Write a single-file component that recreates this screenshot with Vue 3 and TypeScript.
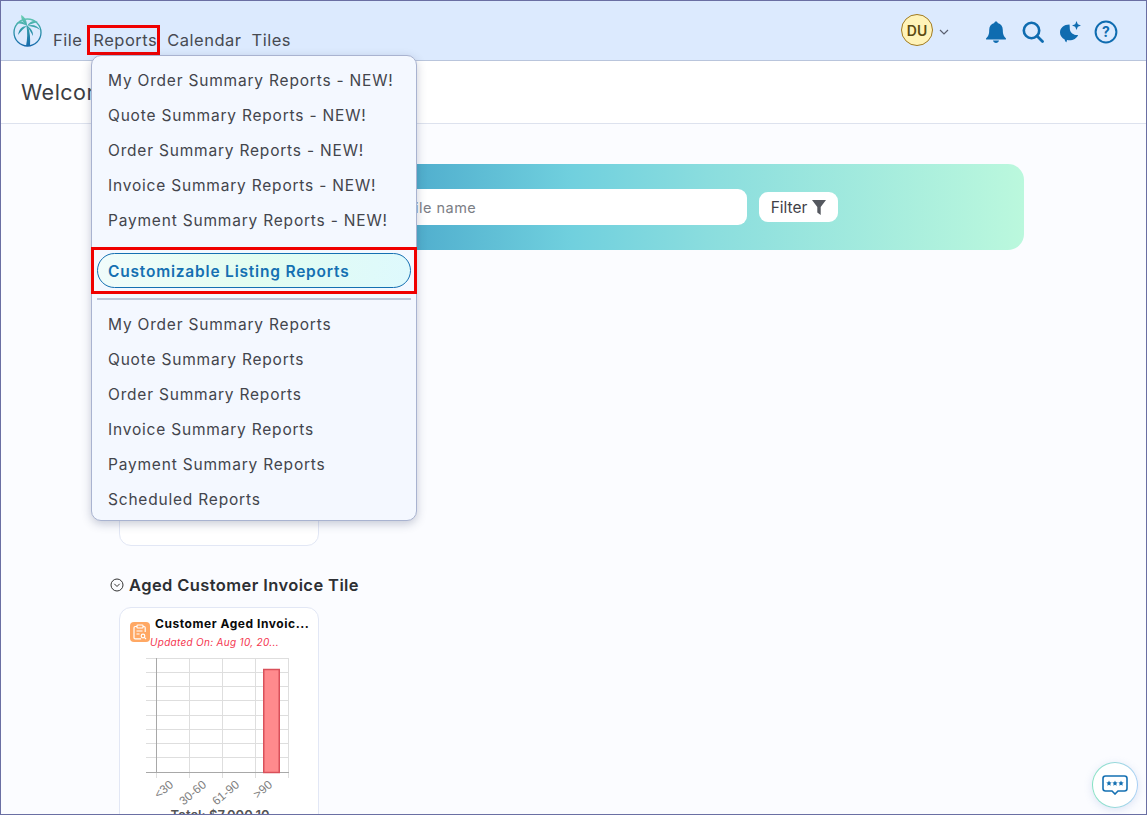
<script setup lang="ts">
const news: string[] = [
  'My Order Summary Reports - NEW!',
  'Quote Summary Reports - NEW!',
  'Order Summary Reports - NEW!',
  'Invoice Summary Reports - NEW!',
  'Payment Summary Reports - NEW!',
]
const olds: string[] = [
  'My Order Summary Reports',
  'Quote Summary Reports',
  'Order Summary Reports',
  'Invoice Summary Reports',
  'Payment Summary Reports',
  'Scheduled Reports',
]
const hLines: number[] = [0.5, 14.5, 28.5, 42.5, 57.5, 71.5, 85.5, 99.5]
const vLines: number[] = [10.5, 43.5, 76.5, 109.5, 142.5]
const labels = [
  { x: 28, t: '<30' },
  { x: 61, t: '30-60' },
  { x: 94, t: '61-90' },
  { x: 127, t: '>90' },
]
</script>

<template>
  <div class="frame">
    <header class="topbar">
      <div class="left">
        <svg class="logo" width="30" height="32" viewBox="0 0 30 32">
          <defs>
            <linearGradient id="lg" x1="0" y1="0" x2="0" y2="32" gradientUnits="userSpaceOnUse">
              <stop offset="0" stop-color="#6ed2b4" />
              <stop offset="0.5" stop-color="#2b93a8" />
              <stop offset="1" stop-color="#1668ad" />
            </linearGradient>
          </defs>
          <circle cx="14.500" cy="17.500" r="13.500" fill="none" stroke="url(#lg)" stroke-width="1.300" />
          <g fill="url(#lg)">
            <path d="M14 11C10 5 6 5 3 9C7 8 11 9 14 11z" />
            <path d="M14 11C14 6 12 2 8 0C8 4 10 8 14 11z" />
            <path d="M14 11C17 6 21 5 25 7C21 8 17 9 14 11z" />
            <path d="M14 11C19 9 24 10 27 15C23 12 18 11 14 11z" />
            <path d="M14 11C9 11 6 14 5 20C8 16 11 13 14 11z" />
            <path d="M14 11C18 13 20 16 20 21C18 17 16 14 14 11z" />
            <path d="M13.500 11h1.500C17 17 17.500 24 17 31h-4C14.500 24 14.500 17 13.500 11z" />
          </g>
        </svg>
        <nav class="nav">
          <span class="nav-item">File</span>
          <span class="nav-item active">Reports</span>
          <span class="nav-item">Calendar</span>
          <span class="nav-item">Tiles</span>
        </nav>
      </div>
      <div class="right">
        <div class="avatar">DU</div>
        <svg class="chev" width="10" height="6" viewBox="0 0 10 6"><path d="M1 1l4 4 4-4" fill="none" stroke="#5b6070" stroke-width="1.200" /></svg>
        <svg class="ic" width="22" height="24" viewBox="0 0 22 24">
          <path d="M11 1.500c-1 0-1.700.7-1.700 1.600C5.900 4 4.200 6.800 4.200 10c0 4.500-1 6.400-3 8.200-.5.500-.2 1.300.5 1.300h18.600c.7 0 1-.8.5-1.300-2-1.800-3-3.700-3-8.200 0-3.200-1.700-6-5.100-6.900 0-.9-.7-1.600-1.700-1.600z" fill="#0f6cb0" />
          <path d="M8 20.600h6c-.3 1.400-1.500 2.300-3 2.300s-2.700-.9-3-2.300z" fill="#0f6cb0" />
        </svg>
        <svg class="ic ic-search" width="22" height="22" viewBox="0 0 22 22">
          <circle cx="9.500" cy="9.500" r="7.700" fill="none" stroke="#0f6cb0" stroke-width="2.600" />
          <path d="M15 15l5.500 5.500" stroke="#0f6cb0" stroke-width="2.800" stroke-linecap="round" />
        </svg>
        <svg class="ic ic-moon" width="24" height="24" viewBox="0 0 24 24">
          <path d="M11.500 4.500c-5.500 0-9.500 3.500-9.500 8 0 3.100 1.900 5.600 4.700 6.900.1 1.200.9 2.500 1.900 2.900-.1-.9.100-1.600.6-2.200 1 .2 1.500.2 2.300.2 4 0 7.300-2 8.600-5.300-4 .5-8-2-8.300-6-.1-1.800 0-3.300-.3-4.500z" fill="#0f6cb0" />
          <path d="M18.500 1l1.300 3.200L23 5.500l-3.200 1.300L18.500 10l-1.300-3.200L14 5.500l3.200-1.300z" fill="#0f6cb0" />
        </svg>
        <svg class="ic-help" width="24" height="24" viewBox="0 0 24 24">
          <circle cx="12" cy="12" r="10.400" fill="none" stroke="#0f6cb0" stroke-width="2" />
          <text x="12" y="17" text-anchor="middle" class="qmark">?</text>
        </svg>
      </div>
    </header>

    <div class="welcome">Welcome</div>

    <main class="content">
      <section class="banner">
        <div class="search">Search by file name</div>
        <div class="filter">
          <span>Filter</span>
          <svg width="14" height="15" viewBox="0 0 14 15"><path d="M0 0h14L8.700 7v8L5.300 12.500V7z" fill="#55585f" /></svg>
        </div>
      </section>

      <div class="card card-empty"></div>

      <h2 class="section-title">
        <svg width="14" height="14" viewBox="0 0 14 14">
          <circle cx="7" cy="7" r="6" fill="none" stroke="#333" stroke-width="1" />
          <path d="M4.300 5.800L7 8.500l2.700-2.700" fill="none" stroke="#333" stroke-width="1" />
        </svg>
        Aged Customer Invoice Tile
      </h2>

      <article class="card tile">
        <div class="tile-head">
          <div class="tile-icon">
            <svg width="14" height="16" viewBox="0 0 14 16" fill="none" stroke="#fff" stroke-width="1.200">
              <path d="M4 2.500H2.200c-.7 0-1.200.5-1.200 1.200v10c0 .7.500 1.200 1.200 1.200h6M10 2.500h1c.7 0 1.200.5 1.200 1.200V8" />
              <rect x="4" y="1" width="6" height="3" rx=".8" />
              <path d="M3.500 7h6M3.500 10h3" />
              <circle cx="10" cy="12" r="1.800" />
              <path d="M11.300 13.300l1.700 1.700" />
            </svg>
          </div>
          <div class="tile-text">
            <div class="tile-title">Customer Aged Invoic...</div>
            <div class="tile-sub">Updated On: Aug 10, 20...</div>
          </div>
        </div>
        <svg class="chart" width="166" height="150" viewBox="0 0 166 150">
          <line v-for="y in hLines" :key="y" x1="0" x2="143" :y1="y" :y2="y" stroke="#dedede" />
          <line v-for="x in vLines" :key="x" :x1="x" :x2="x" y1="0" y2="120" stroke="#dedede" />
          <line x1="10.500" x2="10.500" y1="0" y2="114" stroke="#a8a8a8" />
          <line x1="0" x2="143" y1="114.500" y2="114.500" stroke="#a8a8a8" />
          <rect x="117.750" y="11.500" width="15.500" height="103" fill="#ff8a8d" stroke="#d9505a" stroke-width="1.500" />
          <text v-for="l in labels" :key="l.t" class="tick" text-anchor="end" :transform="`translate(${l.x} 128) rotate(-40)`">{{ l.t }}</text>
        </svg>
        <div class="tile-total">Total: $7,000.10</div>
      </article>
    </main>

    <div class="menu">
      <a v-for="n in news" :key="n" class="menu-item">{{ n }}</a>
      <div class="special-wrap">
        <a class="special">Customizable Listing Reports</a>
      </div>
      <div class="divider"></div>
      <a v-for="o in olds" :key="o" class="menu-item">{{ o }}</a>
    </div>

    <button class="chat">
      <svg width="26" height="20" viewBox="0 0 26 20" fill="none">
        <path d="M3.500 1h19C23.900 1 25 2.100 25 3.500v10c0 1.400-1.100 2.500-2.500 2.500H16L13 19l-3-3H3.500C2.100 16 1 14.900 1 13.500v-10C1 2.100 2.100 1 3.500 1z" stroke="#1570b2" stroke-width="1.600" />
        <g fill="#1570b2">
          <path d="M7 5.500l.8 1.800 1.900.2-1.400 1.300.4 1.900-1.700-1-1.700 1 .4-1.900-1.400-1.300 1.900-.2z" />
          <path d="M13 5.500l.8 1.800 1.900.2-1.400 1.300.4 1.900-1.700-1-1.700 1 .4-1.900-1.400-1.300 1.900-.2z" />
          <path d="M19 5.500l.8 1.800 1.900.2-1.400 1.300.4 1.900-1.700-1-1.700 1 .4-1.900-1.400-1.300 1.900-.2z" />
        </g>
      </svg>
    </button>
  </div>
</template>

<style>
html, body { margin: 0; height: 100%; overflow: hidden; }
</style>

<style scoped>
.frame {
  position: relative;
  width: 1147px;
  height: 815px;
  box-sizing: border-box;
  border: 1px solid #6a6fa3;
  overflow: hidden;
  background: #fbfcff;
  font-family: "Inter", "Noto Sans", sans-serif;
  color: #3f4147;
}
.topbar {
  height: 60px;
  box-sizing: border-box;
  background: #dceafe;
  border-bottom: 1px solid #b9c5dc;
  display: flex;
  justify-content: space-between;
  padding: 0 28px 0 12px;
}
.left { display: flex; align-items: flex-start; }
.logo { margin-top: 14px; }
.nav { display: flex; margin-top: 24px; margin-left: 5px; }
.nav-item {
  font-size: 16.500px;
  line-height: 30px;
  height: 30px;
  padding: 0 5px;
  letter-spacing: 0.5px;
  color: #474a52;
}
.nav-item.active {
  padding: 0 3px 0 6px;
  margin-right: 2px;
  outline: 3px solid #f00000;
  outline-offset: -3px;
}
.right { display: flex; align-items: center; padding-top: 3px; }
.avatar {
  width: 32px;
  height: 32px;
  margin-bottom: 4px;
  box-sizing: border-box;
  border-radius: 50%;
  background: #fff3b8;
  border: 1px solid #a07a22;
  font-size: 14px;
  font-weight: 600;
  color: #5b4a12;
  display: flex;
  align-items: center;
  justify-content: center;
}
.chev { margin: 0 36px 0 6px; }
.ic { margin-right: 15px; }
.ic-search { margin-right: 14px; }
.ic-moon { margin-right: 12px; }
.qmark { font: 700 14px "Inter", sans-serif; fill: #0f6cb0; }
.welcome {
  height: 63px;
  box-sizing: border-box;
  background: #fff;
  border-bottom: 1px solid #dde2ee;
  padding: 0 20px;
  display: flex;
  align-items: center;
  font-size: 21.500px;
  color: #3b3d43;
  letter-spacing: 0.5px;
}
.content {
  padding: 40px 122px 0 108px;
  background: #fbfcff;
}
.banner {
  margin-left: 10px;
  height: 86px;
  border-radius: 16px;
  background: linear-gradient(90deg, #3a9bc6 0%, #4fadcd 32%, #70d0de 50%, #8addde 65%, #bbf8dd 100%);
  display: flex;
  align-items: center;
  padding-left: 201px;
}
.search {
  width: 427px;
  height: 36px;
  box-sizing: border-box;
  background: #fff;
  border-radius: 9px;
  padding-left: 11px;
  display: flex;
  align-items: center;
  font-size: 14.500px;
  color: #7b7e85;
  letter-spacing: 0.5px;
}
.filter {
  margin-left: 12px;
  width: 79px;
  height: 30px;
  box-sizing: border-box;
  background: #fff;
  border-radius: 9px;
  display: flex;
  align-items: center;
  justify-content: center;
  gap: 5px;
  font-size: 15.500px;
  color: #3f4147;
}
.card {
  width: 200px;
  box-sizing: border-box;
  margin-left: 10px;
  background: #fff;
  border: 1px solid #e2e7f5;
  border-radius: 12px;
}
.card-empty { height: 221px; margin-top: 75px; }
.section-title {
  margin: 29px 0 12px 1px;
  height: 20px;
  display: flex;
  align-items: center;
  gap: 5px;
  font-size: 16.500px;
  font-weight: 600;
  color: #2d2f33;
  letter-spacing: 0.4px;
}
.tile { height: 240px; padding: 8px 8px 0 10px; }
.tile-head { display: flex; }
.tile-icon {
  flex: none;
  width: 20px;
  height: 20px;
  margin-top: 6px;
  border-radius: 4px;
  background: #ffa864;
  display: flex;
  align-items: center;
  justify-content: center;
}
.tile-title {
  margin-left: 5px;
  font-size: 12px;
  font-weight: 700;
  line-height: 15px;
  color: #0a0a0a;
  white-space: nowrap;
  letter-spacing: 0.55px;
}
.tile-sub {
  font-size: 10px;
  line-height: 12px;
  margin-top: 5px;
  font-style: italic;
  color: #f4364f;
  white-space: nowrap;
  letter-spacing: 0.3px;
}
.chart { display: block; margin: 10px 0 0 16px; overflow: visible; }
.tick { font: 12px "Liberation Sans", sans-serif; fill: #808080; }
.tile-total {
  margin-top: -1px;
  text-align: center;
  font-size: 13px;
  font-weight: 600;
  color: #555;
}
.menu {
  position: absolute;
  left: 90px;
  top: 54px;
  width: 326px;
  height: 466px;
  box-sizing: border-box;
  background: #f4f8ff;
  border: 1px solid #a9b3d0;
  border-radius: 10px;
  box-shadow: 0 3px 10px rgba(40, 50, 90, 0.25);
  padding: 7px 0 0;
}
.menu-item {
  display: block;
  height: 35px;
  line-height: 35px;
  padding-left: 16px;
  font-size: 15.500px;
  letter-spacing: 0.8px;
  color: #43454c;
  white-space: nowrap;
}
.special-wrap {
  margin: 9px -1px 0;
  height: 47px;
  box-sizing: border-box;
  border: 3px solid #f00000;
  padding: 3px 3px;
}
.special {
  display: block;
  height: 35px;
  box-sizing: border-box;
  line-height: 35px;
  padding-left: 10px;
  border: 1px solid #1570b2;
  border-radius: 18px;
  background: linear-gradient(100deg, #f1fcfb 0%, #e2fdf0 50%, #def9fd 100%);
  color: #1570b2;
  font-size: 15.500px;
  font-weight: 600;
  letter-spacing: 0.8px;
  white-space: nowrap;
}
.divider {
  height: 2px;
  margin: 4px 5px 7px;
  background: #bcc5d8;
}
.chat {
  position: absolute;
  right: 8px;
  bottom: 6px;
  width: 46px;
  height: 46px;
  padding: 0;
  border-radius: 50%;
  border: 1px solid transparent;
  background: linear-gradient(#fff, #fff) padding-box, linear-gradient(90deg, #84e2c2, #a9cff5) border-box;
  box-shadow: 0 2px 8px rgba(100, 130, 200, 0.2);
  display: flex;
  align-items: center;
  justify-content: center;
}
</style>
